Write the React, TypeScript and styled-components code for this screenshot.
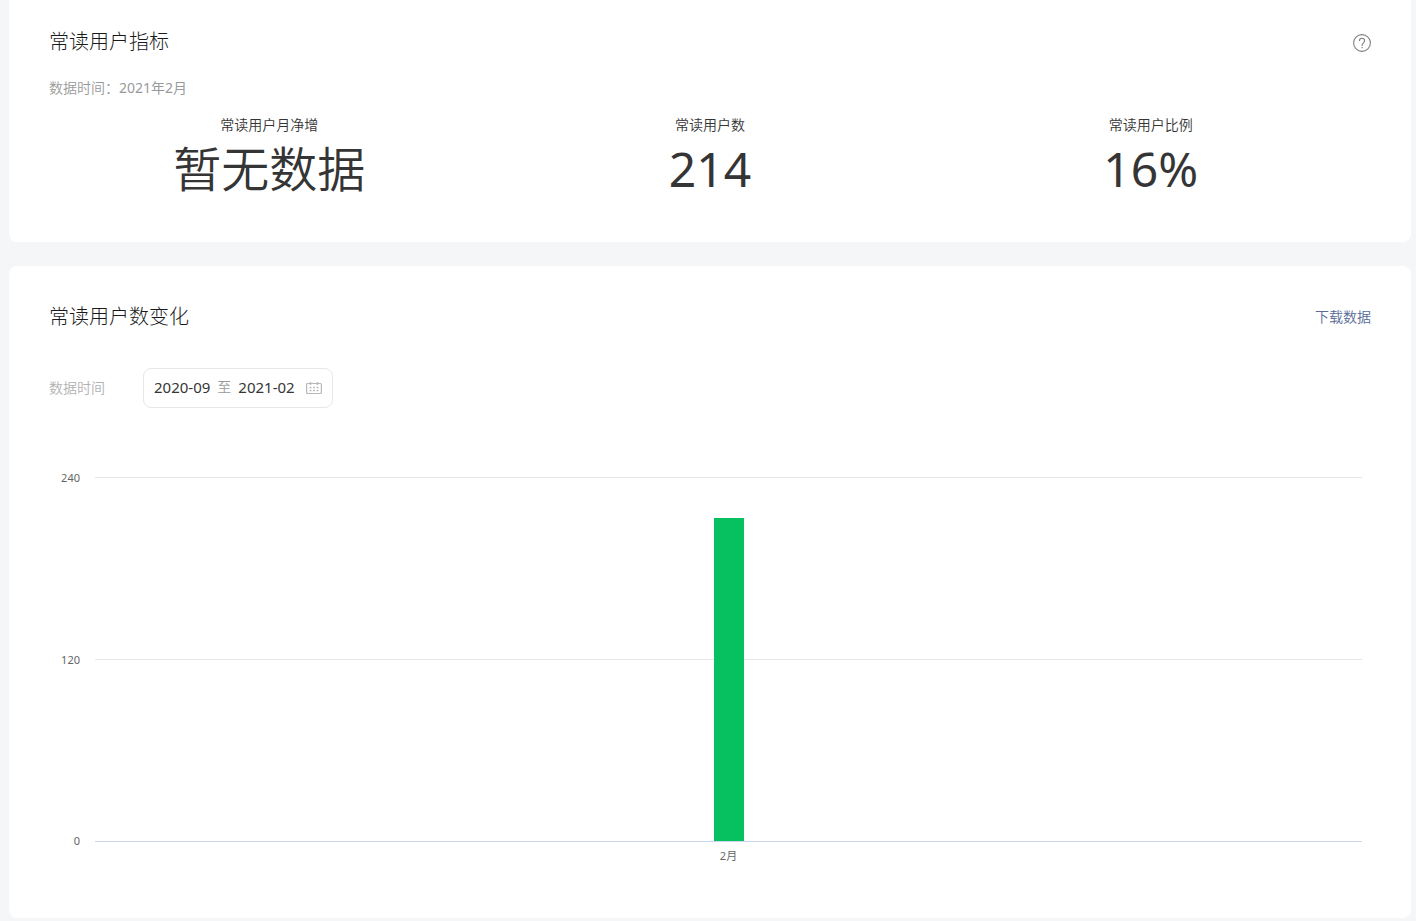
import React from "react";
import styled, { createGlobalStyle } from "styled-components";

const GlobalStyle = createGlobalStyle`
  *, *::before, *::after { box-sizing: border-box; }
  body {
    margin: 0;
    background: #f4f6f8;
    color: #353535;
    font-family: "Noto Sans", "Noto Sans CJK SC", sans-serif;
    font-size: 14px;
    font-weight: 350;
    line-height: 20px;
  }
  h2, p, dl, dd { margin: 0; }
  button { font: inherit; cursor: pointer; }
`;

const Page = styled.main`
  display: flex;
  flex-direction: column;
  gap: 24px;
  padding: 0 5px 3px 9px;
`;

const Card = styled.section<{ $first?: boolean }>`
  padding: ${(p) => (p.$first ? "27px 40px 41px" : "36px 40px 52px")};
  background: #fff;
  border-radius: ${(p) => (p.$first ? "0 0 8px 8px" : "8px")};
`;

const CardHeader = styled.header`
  display: flex;
  align-items: center;
  justify-content: space-between;
  height: 28px;
`;

const Title = styled.h2`
  color: #1a1a1a;
  font-family: "Noto Sans CJK SC", sans-serif;
  font-size: 20px;
  font-weight: 300;
  line-height: 28px;
`;

const HelpButton = styled.button`
  display: flex;
  padding: 4px 0 0;
  border: 0;
  background: none;
  color: #808080;
`;

const Period = styled.p`
  margin-top: 23px;
  color: #9a9a9a;
`;

const PeriodDate = styled.time`
  font-weight: 400;
`;

const Metrics = styled.dl`
  display: grid;
  grid-template-columns: repeat(3, 1fr);
  margin-top: 17px;
  text-align: center;
`;

const MetricName = styled.dt`
  line-height: 20px;
`;

const MetricValue = styled.dd<{ $empty?: boolean }>`
  margin-top: 2px;
  font-size: 48px;
  font-weight: ${(p) => (p.$empty ? 350 : 400)};
  line-height: 64px;
`;

const DownloadLink = styled.a`
  padding-top: 2px;
  color: #576b95;
  text-decoration: none;
`;

const Filter = styled.div`
  display: flex;
  align-items: center;
  gap: 38px;
  margin-top: 38px;
`;

const FilterLabel = styled.label`
  color: #b2b2b2;
`;

const RangeButton = styled.button`
  display: flex;
  align-items: center;
  justify-content: space-between;
  width: 190px;
  height: 40px;
  padding: 0 10px;
  border: 1px solid #e4e8eb;
  border-radius: 8px;
  background: #fff;
  color: #353535;
`;

const RangeText = styled.span`
  display: flex;
  gap: 7px;
  padding-bottom: 2px;
  font-size: 15px;
  font-weight: 400;
`;

const RangeWord = styled.span`
  color: #9a9a9a;
  font-size: 14px;
  font-weight: 350;
`;

const Chart = styled.figure`
  display: grid;
  grid-template-columns: 31px 1fr;
  column-gap: 15px;
  margin: 60px 9px 0 0;
  color: #666;
  font-size: 11px;
  font-weight: 400;
  line-height: 20px;
`;

const Scale = styled.div`
  display: flex;
  flex-direction: column;
  justify-content: space-between;
  height: 383px;
  text-align: right;
`;

const Plot = styled.div`
  display: grid;
  height: 365px;
  margin-top: 9px;
`;

const GridLines = styled.div`
  display: flex;
  grid-area: 1 / 1;
  flex-direction: column;
  justify-content: space-between;
`;

const GridLine = styled.div<{ $base?: boolean }>`
  height: 1px;
  background: ${(p) => (p.$base ? "#ccd6eb" : "#e6e6e6")};
`;

const Bars = styled.div`
  display: flex;
  grid-area: 1 / 1;
  align-items: flex-end;
  justify-content: space-around;
  margin: 2px 0 1px;
`;

const Bar = styled.div`
  width: 30px;
  background: #07c160;
`;

const Months = styled.div`
  display: flex;
  grid-column: 2;
  justify-content: space-around;
  margin-top: -5px;
`;

const metrics = [
  { name: "常读用户月净增", value: null },
  { name: "常读用户数", value: "214" },
  { name: "常读用户比例", value: "16%" },
];

const ticks = [240, 120, 0];
const data = [{ month: "2月", readers: 214 }];

const HelpIcon = () => (
  <svg width="18" height="18" viewBox="0 0 18 18" fill="none" stroke="currentColor" aria-hidden="true">
    <circle cx="9" cy="9" r="8.4" strokeWidth="1.1" />
    <path d="M6.4 6.9C6.4 5.3 7.5 4.3 9 4.3s2.6 1 2.6 2.4c0 1.2-.7 1.7-1.4 2.4-.8.7-1.1 1.1-1.1 2v.8" strokeWidth="1.1" />
    <path d="M9.1 12.9v1.3" strokeWidth="1.2" />
  </svg>
);

const CalendarIcon = () => (
  <svg width="16" height="14" viewBox="0 0 16 14" fill="none" stroke="#b8b8b8" aria-hidden="true">
    <rect x="0.6" y="2.5" width="14.8" height="10" rx="1" strokeWidth="1.2" />
    <path d="M4.5 1v3M11.5 1v3" strokeWidth="1.4" />
    <path d="M3.6 6.5h1.8M7.1 6.5h1.8M10.6 6.5h1.8M3.6 9.5h1.8M7.1 9.5h1.8M10.6 9.5h1.8" strokeWidth="1.4" />
  </svg>
);

export default function App() {
  return (
    <>
      <GlobalStyle />
      <Page>
        <Card $first>
          <CardHeader>
            <Title>常读用户指标</Title>
            <HelpButton type="button" aria-label="指标说明">
              <HelpIcon />
            </HelpButton>
          </CardHeader>
          <Period>
            数据时间：<PeriodDate dateTime="2021-02">2021年2月</PeriodDate>
          </Period>
          <Metrics>
            {metrics.map((m) => (
              <div key={m.name}>
                <MetricName>{m.name}</MetricName>
                <MetricValue $empty={m.value === null}>{m.value ?? "暂无数据"}</MetricValue>
              </div>
            ))}
          </Metrics>
        </Card>
        <Card>
          <CardHeader>
            <Title>常读用户数变化</Title>
            <DownloadLink href="#download">下载数据</DownloadLink>
          </CardHeader>
          <Filter>
            <FilterLabel htmlFor="range">数据时间</FilterLabel>
            <RangeButton type="button" id="range">
              <RangeText>
                2020-09<RangeWord>至</RangeWord>2021-02
              </RangeText>
              <CalendarIcon />
            </RangeButton>
          </Filter>
          <Chart aria-label="常读用户数变化">
            <Scale>
              {ticks.map((t) => (
                <span key={t}>{t}</span>
              ))}
            </Scale>
            <Plot>
              <GridLines>
                {ticks.map((t) => (
                  <GridLine key={t} $base={t === 0} />
                ))}
              </GridLines>
              <Bars>
                {data.map((d) => (
                  <Bar key={d.month} style={{ height: `${(d.readers / ticks[0]) * 100}%` }} />
                ))}
              </Bars>
            </Plot>
            <Months>
              {data.map((d) => (
                <span key={d.month}>{d.month}</span>
              ))}
            </Months>
          </Chart>
        </Card>
      </Page>
    </>
  );
}
